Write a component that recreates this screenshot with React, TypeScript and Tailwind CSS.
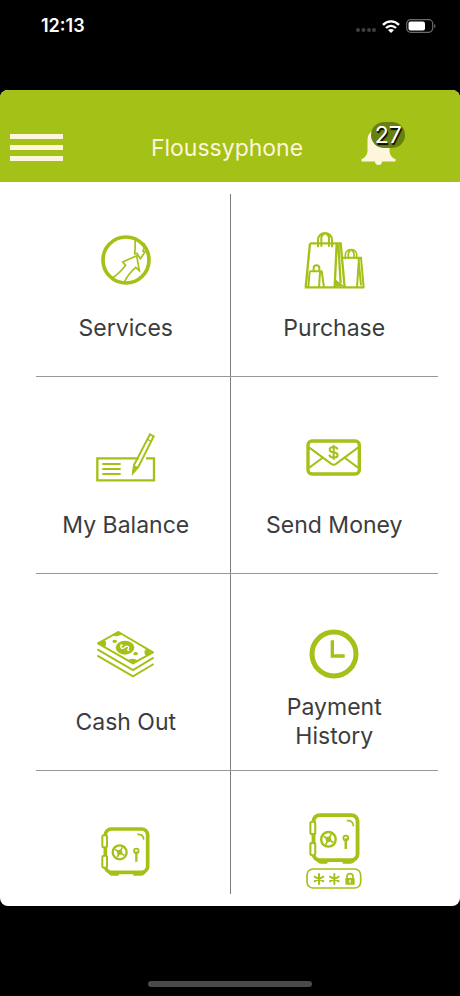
import type { ReactNode } from "react";

function ServicesIcon() {
  return (
    <svg viewBox="47 29 156 156" className="size-[52px]" fill="none" stroke="currentColor">
      <circle cx="125" cy="107" r="69" strokeWidth="11" />
      <path d="M84 161C100 151 112 139 124 123L115 113L157 94L165 139L154 129C139 142 128 156 119 175" strokeWidth="5" />
      <path d="M152 42C153 58 153 72 151 88L158 87L168 103L182 83L176 81C180 71 181 62 179 56" strokeWidth="5" />
    </svg>
  );
}

function PurchaseIcon() {
  return (
    <svg viewBox="41 36 183 171" className="h-[57px] w-[61px]" fill="none" stroke="currentColor" strokeWidth="7">
      <path d="M43 202H222M59 70H151L163 202M59 70L46 202M139 70L133 202M144 74L151 190" />
      <path d="M83 82V60C83 32 125 32 125 60V82M93 80V52C95 44 99 41 104 41M116 80V54C115 46 111 42 106 41" strokeWidth="6" />
      <path d="M153 113H212L220 202M206 113L200 202M205 120L212 196" strokeWidth="6" />
      <path d="M165 118V104C166 84 199 84 199 104V118M174 116V101C175 94 178 91 182 91M191 116V101C190 94 187 92 183 91" strokeWidth="5" />
      <path d="M58 154H94L101 202M58 154L54 202M89 156L86 202" strokeWidth="6" />
      <path d="M70 154V144C70 133 87 133 87 144V154" strokeWidth="6" />
      <path d="M136 180L160 198H136Z" fill="currentColor" strokeWidth="2" />
    </svg>
  );
}

function BalanceIcon() {
  return (
    <svg viewBox="35 25 180 147" className="h-[49px] w-[60px]" fill="none" stroke="currentColor" strokeWidth="7">
      <path d="M163 101H39V167H209V101H185" />
      <path d="M54 118H109M54 133H109M54 148H109" strokeWidth="6" />
      <path d="M197 29L208 35L162 127L146 145L149 121Z" strokeWidth="6" />
      <path d="M188 43L200 50" strokeWidth="4" />
      <path d="M149 123L162 129L145 146Z" fill="currentColor" strokeWidth="3" />
    </svg>
  );
}

function SendMoneyIcon() {
  return (
    <svg viewBox="50 41 168 111" className="h-[37px] w-14" fill="none" stroke="currentColor">
      <rect x="56" y="47" width="154" height="99" rx="12" strokeWidth="10" />
      <path d="M59 66L125 115C130 119 136 119 141 115L207 66M60 127L99 98M206 127L167 98" strokeWidth="6" />
      <path d="M145 72C143 66 138 65 133 65C117 65 117 80 133 81C149 83 149 97 133 97C126 97 121 94 120 88M133 59V103" strokeWidth="6" />
    </svg>
  );
}

function CashOutIcon() {
  return (
    <svg viewBox="36 30 177 144" className="h-12 w-[59px]" fill="none" stroke="currentColor">
      <path d="M42 70L103 36L207 97L147 130Z" strokeWidth="6" strokeLinejoin="round" />
      <path d="M39 70L60 59C69 64 68 74 62 82ZM103 33L83 45C92 51 102 50 114 42ZM210 97L188 86C179 92 179 101 188 109ZM147 133L130 123C138 114 151 114 163 123Z" fill="currentColor" stroke="none" />
      <ellipse cx="123" cy="83" rx="28" ry="21" fill="currentColor" stroke="none" />
      <ellipse cx="92" cy="64" rx="7" ry="5" fill="currentColor" stroke="none" />
      <ellipse cx="155" cy="101" rx="7" ry="5" fill="currentColor" stroke="none" />
      <path d="M113 73C105 84 115 88 122 82C129 76 139 79 131 90M110 74L116 77M129 88L136 92" stroke="white" strokeWidth="4" />
      <path d="M40 88L147 150L209 113M40 107L147 169L209 132" strokeWidth="6" />
    </svg>
  );
}

function ClockIcon() {
  return (
    <svg viewBox="58 28 150 150" className="size-[50px]" fill="none" stroke="currentColor">
      <circle cx="133" cy="103" r="66" strokeWidth="15" />
      <path d="M128 62V109H165" strokeWidth="10" />
    </svg>
  );
}

function SafeIcon({ className }: { className: string }) {
  return (
    <svg viewBox="51 49 147 147" className={className} fill="none" stroke="currentColor">
      <rect x="64" y="55" width="127" height="130" rx="18" strokeWidth="11" />
      <rect x="55" y="74" width="14" height="36" rx="5" fill="white" strokeWidth="6" />
      <rect x="55" y="135" width="14" height="36" rx="5" fill="white" strokeWidth="6" />
      <path d="M72 184H108L103 195H84C78 195 74 191 72 184ZM145 184H186C183 191 178 195 171 195H149Z" fill="currentColor" stroke="none" />
      <circle cx="107" cy="125" r="21" strokeWidth="7" />
      <path d="M93 116L121 134M115 110L99 140" strokeWidth="5" />
      <circle cx="107" cy="125" r="8" fill="currentColor" stroke="none" />
      <circle cx="157" cy="121" r="7" strokeWidth="5" />
      <path d="M157 122V153" strokeWidth="7" />
      <path d="M160 71C172 70 179 76 179 87" strokeWidth="5" />
    </svg>
  );
}

function PinSafeIcon() {
  return (
    <span className="flex flex-col items-center gap-1">
      <SafeIcon className="size-[51px]" />
      <svg viewBox="50 206 168 63" className="h-[21px] w-14" fill="none" stroke="currentColor">
        <rect x="53" y="209" width="161" height="57" rx="18" strokeWidth="5" />
        <path d="M89 222V256M74 231L104 247M104 231L74 247M135 222V256M120 231L150 247M150 231L120 247" strokeWidth="6" />
        <path d="M173 238V232C173 220 191 220 191 232V238" strokeWidth="5" />
        <rect x="168" y="236" width="28" height="20" rx="3" fill="currentColor" stroke="none" />
        <path d="M182 241V250" stroke="white" strokeWidth="4" />
      </svg>
    </span>
  );
}

function StatusBar() {
  return (
    <div className="flex h-[90px] items-start justify-between pt-3.5 pr-6 pl-[41px] text-white">
      <time className="text-lg leading-6 font-semibold">12:13</time>
      <div className="flex h-6 items-center gap-1.5">
        <svg viewBox="0 0 20 14" className="h-3.5 w-5" fill="#3f3f3f" aria-hidden="true">
          <circle cx="2" cy="11" r="2" />
          <circle cx="7.5" cy="11" r="2" />
          <circle cx="13" cy="11" r="2" />
          <circle cx="18" cy="11" r="2" />
        </svg>
        <svg viewBox="0 0 18 13" className="h-[13px] w-[18px]" fill="none" stroke="currentColor" strokeWidth="2.4" aria-hidden="true">
          <path d="M1 4.8C5.500 .2 12.500 .2 17 4.800M4 8C6.900 5.100 11.100 5.100 14 8" />
          <path d="M9 13L6 10C7.600 8.500 10.400 8.500 12 10Z" fill="currentColor" stroke="none" />
        </svg>
        <svg viewBox="0 0 30 14" className="h-3.5 w-[30px]" fill="none" aria-hidden="true">
          <rect x=".7" y=".7" width="26" height="12.600" rx="4" stroke="#6b6b6b" strokeWidth="1.200" />
          <rect x="2.500" y="2.500" width="16.500" height="9" rx="2" fill="white" />
          <path d="M28.200 5V9.200C30 8.600 30 5.600 28.200 5Z" fill="#6b6b6b" />
        </svg>
      </div>
    </div>
  );
}

function Header() {
  return (
    <header className="grid h-[92px] grid-cols-3 items-center bg-[#a3c117] pt-[23px] pr-4 pl-2.5 text-[#fdf5dc]">
      <button type="button" aria-label="Menu" className="flex w-[53px] flex-col gap-1.5">
        <span className="h-[5px] w-full bg-current" />
        <span className="h-[5px] w-full bg-current" />
        <span className="h-[5px] w-full bg-current" />
      </button>
      <h1 className="flex justify-center text-[23px] leading-7 whitespace-nowrap">Floussyphone</h1>
      <div className="flex justify-center pb-0.5 pl-3.5">
        <button type="button" aria-label="Notifications" className="relative">
          <svg viewBox="0 0 35 37" className="h-[37px] w-[35px]" fill="currentColor">
            <path d="M17.500 1C10 2 6.500 6 6.500 12V22C6.500 27 4 30 .500 31V33.500H34.500V31C31 30 28.500 27 28.500 22V12C28.500 6 25 2 17.500 1Z" />
            <circle cx="17.500" cy="33.500" r="3.500" />
          </svg>
          <span className="absolute -top-1.5 left-2.5 flex h-[26px] w-[34px] items-center justify-center rounded-full bg-[#67800f] text-[23px] leading-6 text-white text-shadow-[1px_2px_1px_black]">
            27
          </span>
        </button>
      </div>
    </header>
  );
}

function Tile({ icon, label, name }: { icon: ReactNode; label?: string; name?: string }) {
  return (
    <button
      type="button"
      aria-label={name}
      className="flex flex-1 flex-col items-center justify-end gap-px border-[#7d7d80] text-[#a3c117] last:border-l"
    >
      <span className="flex h-[76px] items-center justify-center">{icon}</span>
      {label && (
        <span className="flex h-[58px] max-w-36 items-center justify-center text-[23px] leading-[29px] text-[#3c3c3e]">
          {label}
        </span>
      )}
    </button>
  );
}

function Row({ children, first, last }: { children: ReactNode; first?: boolean; last?: boolean }) {
  const spacing = first
    ? "*:pt-7 *:pb-[19px]"
    : last
      ? "*:pt-[42px] *:pb-[5px]"
      : "*:pt-[42px] *:pb-[19px]";
  return <div className={`flex ${spacing}`}>{children}</div>;
}

function Divider() {
  return <hr className="ml-3.5 border-[#98989a]" />;
}

export default function App() {
  return (
    <div className="flex min-h-screen flex-col bg-black font-[Inter,'Liberation_Sans',sans-serif]">
      <StatusBar />
      <div className="overflow-hidden rounded-lg bg-white">
        <Header />
        <main className="px-[22px] py-3">
          <Row first>
            <Tile icon={<ServicesIcon />} label="Services" />
            <Tile icon={<PurchaseIcon />} label="Purchase" />
          </Row>
          <Divider />
          <Row>
            <Tile icon={<BalanceIcon />} label="My Balance" />
            <Tile icon={<SendMoneyIcon />} label="Send Money" />
          </Row>
          <Divider />
          <Row>
            <Tile icon={<CashOutIcon />} label="Cash Out" />
            <Tile icon={<ClockIcon />} label="Payment History" />
          </Row>
          <Divider />
          <Row last>
            <Tile icon={<SafeIcon className="size-[49px]" />} name="Safe" />
            <Tile icon={<PinSafeIcon />} name="Safe code" />
          </Row>
        </main>
      </div>
      <div className="flex flex-1 items-end justify-center pt-10 pb-[9px]">
        <div className="h-1.5 w-[164px] rounded-full bg-[#4a4a4a]" />
      </div>
    </div>
  );
}
